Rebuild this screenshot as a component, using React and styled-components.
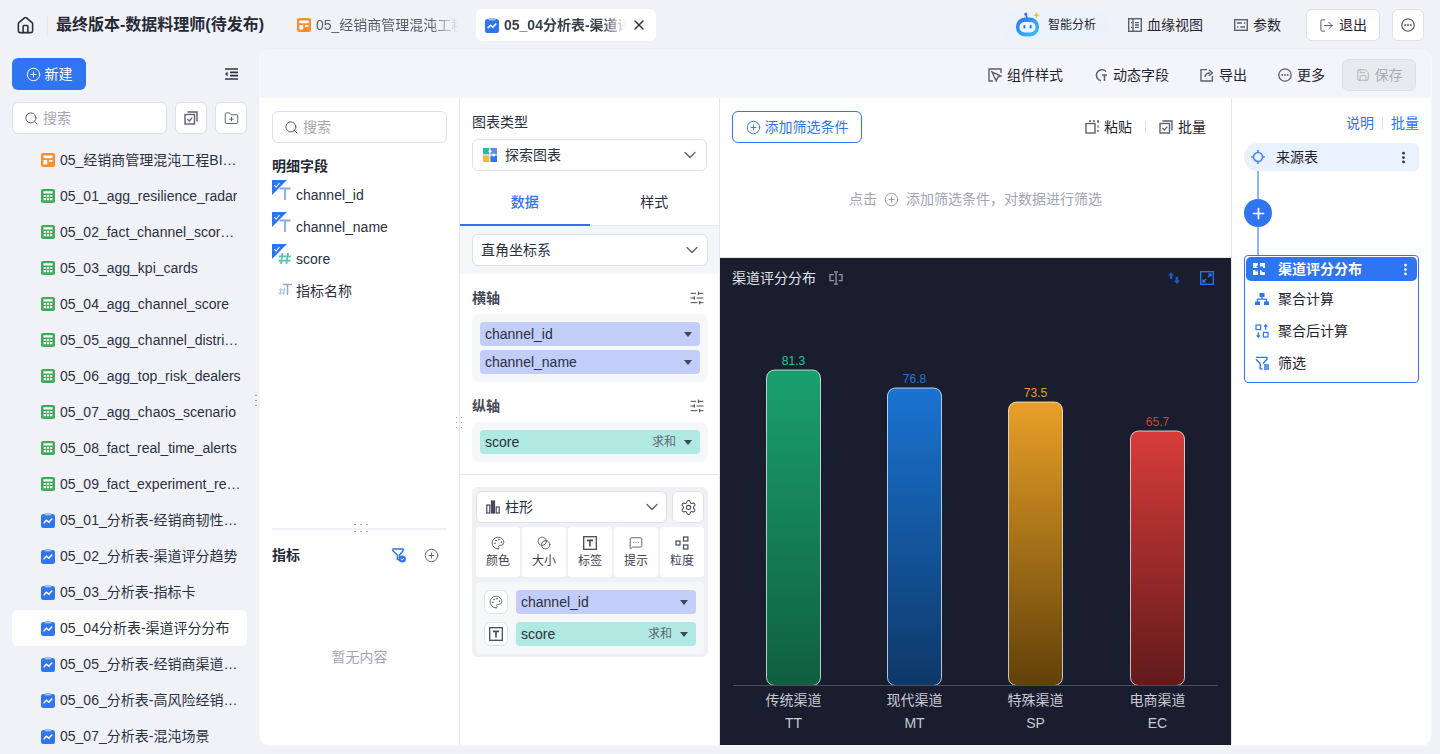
import React from "react";
import styled, { createGlobalStyle } from "styled-components";
import {
  House,
  Search,
  ChevronDown,
  CirclePlus,
  X,
  Settings,
  EllipsisVertical,
  Palette,
  SlidersHorizontal,
  FolderPlus,
  Save,
  LogOut,
  MessageSquareMore,
  Plus,
  Blend,
} from "lucide-react";

const BLUE = "#2f74f0";
const INK = "#1f2430";
const FONT = `"Liberation Sans", "Noto Sans CJK SC", sans-serif`;

const GlobalStyle = createGlobalStyle`
  html, body { margin: 0; padding: 0; height: 754px; overflow: hidden; }
  body { background: #f1f2f8; font-family: ${FONT}; font-size: 14px; line-height: 20px; color: ${INK}; }
  * { box-sizing: border-box; }
`;

/* ---------- drawn icons ---------- */

const Dashboard = () => (
  <svg width="14" height="14" viewBox="0 0 14 14">
    <rect width="14" height="14" rx="2" fill="#f98d2b" />
    <path d="M2.4 2.6h9.2v2.6H2.4zM2.4 7h3.8v4.4H2.4zM8 7h3.6v1.7H8z" fill="#fff" />
  </svg>
);

const Sheet = () => (
  <svg width="14" height="14" viewBox="0 0 14 14">
    <rect width="14" height="14" rx="2" fill="#43a95a" />
    <path d="M2.4 2.2h9.2v2.2H2.4zM2.6 6h2.4v1.8H2.6zM5.8 6h2.4v1.8H5.8zM9 6h2.4v1.8H9zM2.6 9h2.4v2.2H2.6zM5.8 9h2.4v2.2H5.8zM9 9h2.4v2.2H9z" fill="#fff" />
  </svg>
);

const Analysis = () => (
  <svg width="14" height="15" viewBox="0 0 14 15">
    <rect y="1" width="14" height="14" rx="2.5" fill={BLUE} />
    <rect x="3.5" width="7" height="2.4" rx="1" fill="#9dbdf7" />
    <path d="M2.6 10.2l2.8-3 2.4 2 3.4-3.8" fill="none" stroke="#fff" strokeWidth="1.5" />
  </svg>
);

const BatchIcon = ({ size = 14 }) => (
  <svg width={size} height={size} viewBox="0 0 14 14" fill="none" stroke="#5b6070" strokeWidth="1.4">
    <path d="M3.5 1h9.5v9.5" />
    <rect x="1" y="3.5" width="9.5" height="9.5" />
    <path d="M3.4 8l1.9 2 3-3.4" strokeWidth="1.2" />
  </svg>
);

const PasteIcon = () => (
  <svg width="14" height="14" viewBox="0 0 14 14" fill="none" stroke="#5b6070" strokeWidth="1.4">
    <rect x="1" y="3.5" width="9" height="9.5" />
    <path d="M4 1h2M8 1h2M12 1h1.2v2M13 5.5v2M13 10v2" />
  </svg>
);

const StyleIcon = () => (
  <svg width="14" height="14" viewBox="0 0 14 14" fill="none" stroke="#5b6070" strokeWidth="1.4">
    <path d="M13 5V1H1v12h4" />
    <path d="M4 4l9 4-3.4 1.4L8.2 13z" />
  </svg>
);

const DynamicIcon = () => (
  <svg width="14" height="14" viewBox="0 0 14 14" fill="none" stroke="#5b6070" strokeWidth="1.5">
    <path d="M12 3.4A5.6 5.6 0 1 0 7 12.8" />
    <path d="M8 7h5M10.5 7v6" />
  </svg>
);

const ExportIcon = () => (
  <svg width="14" height="14" viewBox="0 0 14 14" fill="none" stroke="#5b6070" strokeWidth="1.4">
    <path d="M7 1.6H1V13h11.4V8" />
    <path d="M5 9c.3-2.6 2-4 5-4M9 2l3.4 3L9 7.8" />
  </svg>
);

const LineageIcon = () => (
  <svg width="14" height="14" viewBox="0 0 14 14" fill="none" stroke="#5b6070" strokeWidth="1.4">
    <rect x=".7" y=".7" width="12.6" height="12.6" />
    <path d="M5 1v12M3 4.6h1M3 9.4h1M7 4.6h4M7 9.4h4M7 7h4" />
  </svg>
);

const ParamIcon = () => (
  <svg width="14" height="12" viewBox="0 0 14 12" fill="none" stroke="#5b6070" strokeWidth="1.4">
    <rect x=".7" y=".7" width="12.6" height="10.6" />
    <path d="M3 4h5M10 4h1.4M3 8h1.4M6.4 8H11" />
  </svg>
);

const MoreCircle = ({ size = 14, color = "#5b6070" }) => (
  <svg width={size} height={size} viewBox="0 0 14 14">
    <circle cx="7" cy="7" r="6.2" fill="none" stroke={color} strokeWidth="1.3" />
    <circle cx="4.2" cy="7" r="1" fill={color} />
    <circle cx="7" cy="7" r="1" fill={color} />
    <circle cx="9.8" cy="7" r="1" fill={color} />
  </svg>
);

const CollapseIcon = () => (
  <svg width="14" height="12" viewBox="0 0 14 12" fill="none" stroke="#2f3442" strokeWidth="1.7">
    <path d="M1 1h13M6 4.4h8M6 7.6h8M1 11h13" />
    <path d="M3.6 3.6L1 6l2.6 2.4z" fill="#2f3442" stroke="none" />
  </svg>
);

const Robot = () => (
  <svg width="28" height="28" viewBox="0 0 28 28">
    <defs>
      <linearGradient id="robotHead" x1="0" y1="0" x2="1" y2="1">
        <stop offset="0" stopColor="#2f6ef2" />
        <stop offset="1" stopColor="#33c9f5" />
      </linearGradient>
    </defs>
    <path d="M13 7l-1-3" stroke="#2f6ef2" strokeWidth="1.6" />
    <circle cx="11.8" cy="3.2" r="1.4" fill="#2f6ef2" />
    <path d="M22.5 1l.9 2.3 2.3.9-2.3.9-.9 2.3-.9-2.3-2.3-.9 2.3-.9z" fill="#f5b92e" />
    <rect x="2" y="6.5" width="23" height="19" rx="9" fill="url(#robotHead)" />
    <rect x="5.5" y="11" width="16" height="10.5" rx="5" fill="#e9f5ff" />
    <rect x="9.4" y="14" width="2" height="3.6" rx="1" fill="#2f6ef2" />
    <rect x="15.6" y="14" width="2" height="3.6" rx="1" fill="#2f6ef2" />
  </svg>
);

const Explore = () => (
  <svg width="14" height="14" viewBox="0 0 14 14">
    <rect width="6.4" height="6.4" fill="#2bb8a6" />
    <rect x="7.4" width="6.6" height="6.4" fill="#6a86ee" />
    <rect y="7.4" width="6.4" height="6.6" fill="#f7b63c" />
    <rect x="7.4" y="7.4" width="6.6" height="6.6" fill="#2f74f0" />
    <circle cx="7" cy="3.2" r="1.5" fill="#fff" />
    <circle cx="10.6" cy="7" r="1.5" fill="#fff" />
  </svg>
);

const BarsIcon = () => (
  <svg width="14" height="14" viewBox="0 0 14 14" fill="none" stroke="#444a5a" strokeWidth="1.2">
    <rect x=".8" y="5" width="3" height="8" />
    <rect x="5.5" y="1" width="3" height="12" fill="#444a5a" />
    <rect x="10.2" y="7" width="3" height="6" />
  </svg>
);

const TextBox = ({ size = 14 }) => (
  <svg width={size} height={size} viewBox="0 0 14 14" fill="none" stroke="#444a60" strokeWidth="1.3">
    <rect x=".7" y=".7" width="12.6" height="12.6" />
    <path d="M4 4.4h6M7 4.4v6" strokeWidth="1.6" />
  </svg>
);

const GrainIcon = () => (
  <svg width="14" height="14" viewBox="0 0 14 14" fill="none" stroke="#444a5a" strokeWidth="1.2">
    <rect x="1" y="5" width="4" height="4" />
    <rect x="8.5" y="1" width="4.4" height="4" />
    <rect x="8.5" y="9" width="4.4" height="4" />
  </svg>
);

const CheckCorner = () => (
  <svg width="15" height="15" viewBox="0 0 15 15">
    <path d="M0 0h15L0 15z" fill={BLUE} />
    <path d="M2.4 5.4l1.8 1.6 3.2-3.8" fill="none" stroke="#fff" strokeWidth="1.1" />
  </svg>
);

const FieldGlyph = ({ kind }) => (
  <FieldIcon>
    {kind !== "mix" && <CheckCorner />}
    <svg width="16" height="16" viewBox="0 0 16 16" fill="none">
      {kind === "text" && <path d="M2.5 3.5h11M8 3.5V15" stroke="#8ea9de" strokeWidth="1.8" />}
      {kind === "num" && <path d="M5.6 4L4 15M11 4L9.4 15M2 7.4h12M1.6 11.6h12" stroke="#5cc4b4" strokeWidth="1.8" />}
      {kind === "mix" && (
        <>
          <path d="M6 3.5h9M10.5 3.5V14" stroke="#8ea9de" strokeWidth="1.5" />
          <path d="M4 7L3 14M7.4 7l-1 7M1.6 9h7M1.2 12h7" stroke="#b5c0de" strokeWidth="1.1" />
        </>
      )}
    </svg>
  </FieldIcon>
);

const FilterCheck = () => (
  <svg width="14" height="15" viewBox="0 0 14 15">
    <path d="M1 1h10v2L7.5 7v5.4L5.4 11V7L1 3z" fill="none" stroke={BLUE} strokeWidth="1.5" />
    <circle cx="10.4" cy="11" r="3.5" fill={BLUE} />
    <path d="M8.8 11l1.2 1.2 2-2.2" fill="none" stroke="#fff" strokeWidth="1" />
  </svg>
);

const SourceIcon = () => (
  <svg width="14" height="14" viewBox="0 0 14 14" fill="none" stroke="#4d8af2" strokeWidth="1.7">
    <circle cx="7" cy="7" r="4.5" />
    <path d="M7 0v3M7 11v3M0 7h3M11 7h3" />
  </svg>
);

const PuzzleIcon = () => (
  <svg width="14" height="14" viewBox="0 0 14 14" fill="#fff">
    <path d="M1 1h5v2.4H4.6v2H6V6H1zM8 1h5v5h-2V4.4H8zM1 8h2.4v1.6h2.2V8H6v5H1zM8 8h1.6v2H13v3H8z" />
  </svg>
);

const AggIcon = () => (
  <svg width="14" height="14" viewBox="0 0 14 14" fill={BLUE}>
    <path d="M4.5 1h5v4h-5zM0 9.5h5V13H0zM9 9.5h5V13H9z" />
    <path d="M2.5 10V7.2h9V10M7 5v2.2" fill="none" stroke={BLUE} strokeWidth="1.3" />
  </svg>
);

const PostCalcIcon = () => (
  <svg width="14" height="14" viewBox="0 0 14 14" fill="none" stroke={BLUE} strokeWidth="1.2">
    <rect x="1" y="1" width="4.6" height="4.6" />
    <rect x="8.4" y="8.4" width="4.6" height="4.6" />
    <path d="M10.7 6V1M9 2.6L10.7.8l1.7 1.8M3.3 8v5M1.6 11.4l1.7 1.8L5 11.4" />
  </svg>
);

const FilterIcon = () => (
  <svg width="14" height="14" viewBox="0 0 14 14" fill="none" stroke={BLUE} strokeWidth="1.4">
    <path d="M1 1.4h11v1.8L8 7.4M5.2 7.6v5L7.4 13" />
    <path d="M1 3.2l4.2 4.4M9 9h5M9 11h5M9 13h5" />
  </svg>
);

const SortIcon = () => (
  <svg width="14" height="14" viewBox="0 0 14 14" fill="#2257bd">
    <path d="M4 1l3.4 3.6H5.4V8H2.8V4.6H.8zM10 13l-3.4-3.6h2V6h2.6v3.4h2z" />
  </svg>
);

const ExpandIcon = () => (
  <svg width="14" height="14" viewBox="0 0 14 14" fill="none" stroke={BLUE} strokeWidth="1.3">
    <rect x=".7" y=".7" width="12.6" height="12.6" />
    <path d="M8 6l3-3M8.6 3H11v2.4M6 8l-3 3M3 8.6V11h2.4" />
  </svg>
);

const TitleEditIcon = () => (
  <svg width="14" height="14" viewBox="0 0 14 14" fill="none" stroke="#9498a6" strokeWidth="1.3">
    <path d="M7 .6v12.8M5 .8h4M5 13.2h4M5 3.6H1v6h4M9.6 3.6H13v6H9.6" />
  </svg>
);

/* ---------- top bar ---------- */

const TopBar = styled.header`
  height: 50px;
  display: flex;
  align-items: center;
  padding: 0 16px;
`;
const HomeLink = styled.div`
  width: 32px;
  height: 20px;
  display: flex;
  align-items: center;
  border-right: 1px solid #e8e9ef;
  margin-right: 8px;
  color: #2c3140;
`;
const AppTitle = styled.h1`
  margin: 0 24px 0 0;
  font-size: 16px;
  line-height: 22px;
  font-weight: 700;
  white-space: nowrap;
  color: #262a36;
`;
const Tab = styled.div`
  width: 180px;
  height: 32px;
  margin-right: 8px;
  padding: 0 9px;
  border-radius: 6px;
  display: flex;
  align-items: center;
  gap: 5px;
  background: ${(p) => (p.$active ? "#fff" : "transparent")};
  font-weight: ${(p) => (p.$active ? 700 : 400)};
  color: ${(p) => (p.$active ? "#3a3f4c" : "#555b69")};
`;
const TabLabel = styled.span`
  flex: 1;
  overflow: hidden;
  white-space: nowrap;
  -webkit-mask-image: linear-gradient(90deg, #000 80%, transparent);
  mask-image: linear-gradient(90deg, #000 80%, transparent);
`;
const TopActions = styled.div`
  margin-left: auto;
  display: flex;
  align-items: center;
`;
const AiPill = styled.div`
  width: 110px;
  height: 31px;
  margin-right: 18px;
  padding-left: 14px;
  border-radius: 16px;
  background: #ebf2fc;
  display: flex;
  align-items: center;
  gap: 6px;
  font-size: 12px;
`;
const TextAction = styled.div`
  display: flex;
  align-items: center;
  gap: 5px;
  white-space: nowrap;
  margin-right: ${(p) => p.$gap ?? 0}px;
  color: ${INK};
`;
const OutlineButton = styled.div`
  height: 32px;
  width: ${(p) => p.$width}px;
  margin-left: ${(p) => p.$left ?? 0}px;
  background: #fff;
  border: 1px solid #dfe1e8;
  border-radius: 6px;
  display: flex;
  align-items: center;
  justify-content: center;
  gap: 5px;
  color: #4d5262;
  flex-shrink: 0;
`;

/* ---------- sidebar ---------- */

const Body = styled.div`
  display: flex;
  height: 704px;
`;
const Sidebar = styled.aside`
  position: relative;
  width: 259px;
  flex-shrink: 0;
  padding: 8px 12px 0;
  overflow: hidden;
`;
const SideHead = styled.div`
  display: flex;
  justify-content: space-between;
  align-items: center;
  padding-right: 9px;
  margin-bottom: 12px;
`;
const NewButton = styled.div`
  width: 74px;
  height: 32px;
  background: ${BLUE};
  border-radius: 6px;
  color: #fff;
  display: flex;
  align-items: center;
  justify-content: center;
  gap: 4px;
`;
const SearchRow = styled.div`
  display: flex;
  gap: 8px;
  margin-bottom: 8px;
`;
const SearchBox = styled.div`
  height: 32px;
  flex: 1;
  padding-left: 11px;
  background: #fff;
  border: 1px solid #dfe1e8;
  border-radius: 6px;
  display: flex;
  align-items: center;
  gap: 4px;
  color: #a5a8b2;
`;
const FileRow = styled.div`
  height: 36px;
  padding: 0 6px 0 29px;
  border-radius: 6px;
  display: flex;
  align-items: center;
  gap: 5px;
  background: ${(p) => (p.$active ? "#fff" : "transparent")};
  span {
    overflow: hidden;
    white-space: nowrap;
    text-overflow: ellipsis;
    color: #2b3040;
  }
  svg {
    flex-shrink: 0;
  }
`;
const Grip = styled.div`
  position: absolute;
  width: ${(p) => p.$w}px;
  height: ${(p) => p.$h}px;
  right: ${(p) => p.$right};
  top: ${(p) => p.$top};
  background-image: radial-gradient(circle, #9a9eaa 0.8px, transparent 1px);
  background-size: ${(p) => p.$tile};
`;

/* ---------- panel ---------- */

const Panel = styled.main`
  width: 1173px;
  height: 696px;
  background: #f4f5fa;
  border: 1px solid #f9f9fc;
  border-radius: 10px;
  overflow: hidden;
  display: flex;
  flex-direction: column;
`;
const PanelBar = styled.div`
  height: 47px;
  flex-shrink: 0;
  display: flex;
  align-items: center;
  justify-content: flex-end;
  padding-right: 15px;
`;
const SaveButton = styled.div`
  width: 74px;
  height: 32px;
  margin-left: 17px;
  background: #e9eaee;
  border: 1px solid #dfe0e5;
  border-radius: 6px;
  color: #a9abb3;
  display: flex;
  align-items: center;
  justify-content: center;
  gap: 5px;
`;
const Columns = styled.div`
  flex: 1;
  display: flex;
  min-height: 0;
  background: #fff;
`;

/* fields column */

const FieldColumn = styled.section`
  position: relative;
  width: 200px;
  flex-shrink: 0;
  border-right: 1px solid #e6e7ec;
  padding: 13px 12px 0;
  display: flex;
  flex-direction: column;
`;
const FieldHeading = styled.div`
  font-weight: 700;
  margin: 15px 0 5px;
  line-height: 16px;
  color: #262a36;
`;
const FieldRow = styled.div`
  height: 32px;
  padding-left: 24px;
  display: flex;
  align-items: center;
  position: relative;
  color: #2b3040;
`;
const FieldIcon = styled.span`
  position: absolute;
  left: 0;
  top: 1px;
  width: 22px;
  height: 24px;
  > svg:first-child {
    position: absolute;
    left: 0;
    top: 0;
  }
  > svg:last-child {
    position: absolute;
    left: 5px;
    top: 5px;
  }
`;
const FieldSpacer = styled.div`
  flex: 1;
  border-bottom: 2px solid #f1f2f5;
`;
const MetricHead = styled.div`
  display: flex;
  align-items: center;
  font-weight: 700;
  margin-top: 17px;
  color: #262a36;
  height: 16px;
  svg:first-of-type {
    margin-left: auto;
    margin-right: 18px;
  }
  svg:last-of-type {
    margin-right: 8px;
    color: #5b6070;
  }
`;
const EmptyNote = styled.div`
  height: 182px;
  display: flex;
  align-items: center;
  justify-content: center;
  color: #a2a5b0;
  padding-top: 5px;
`;

/* config column */

const ConfigColumn = styled.section`
  width: 260px;
  flex-shrink: 0;
  border-right: 1px solid #e6e7ec;
  display: flex;
  flex-direction: column;
`;
const ChartType = styled.div`
  padding: 16px 12px 0;
`;
const SmallLabel = styled.div`
  line-height: 16px;
  margin-bottom: 9px;
  color: #2b3040;
`;
const SelectBox = styled.div`
  height: 32px;
  padding: 0 ${(p) => p.$right ?? 6}px 0 ${(p) => p.$left ?? 10}px;
  background: #fff;
  border: 1px solid #dfe1e8;
  border-radius: 6px;
  display: flex;
  align-items: center;
  gap: 5px;
  color: #2b3040;
  flex: ${(p) => (p.$grow ? 1 : "none")};
  svg:last-child {
    margin-left: auto;
    color: #5b6070;
  }
`;
const TabRow = styled.div`
  margin-top: 9px;
  height: 46px;
  display: flex;
  border-bottom: 1px solid #e6e7ec;
`;
const ConfigTab = styled.div`
  flex: 1;
  display: flex;
  align-items: center;
  justify-content: center;
  color: ${(p) => (p.$active ? BLUE : "#2b3040")};
  font-weight: ${(p) => (p.$active ? 500 : 400)};
  border-bottom: 2px solid ${(p) => (p.$active ? BLUE : "transparent")};
  margin-bottom: -1px;
`;
const CoordBand = styled.div`
  background: #f5f6f9;
  padding: 8px 11px 8px 12px;
`;
const AxisSection = styled.div`
  padding: 16px 11px 0 12px;
`;
const AxisHead = styled.div`
  height: 16px;
  margin-bottom: 8px;
  display: flex;
  align-items: center;
  justify-content: space-between;
  font-weight: 700;
  color: #454a58;
  svg {
    margin-right: 3px;
    color: #454a58;
  }
`;
const AxisBox = styled.div`
  background: #f5f7f9;
  border-radius: 8px;
  padding: 8px;
  display: flex;
  flex-direction: column;
  gap: 4px;
`;
const Pill = styled.div`
  height: 24px;
  flex: 1 1 auto;
  padding: 0 8px 0 5px;
  border-radius: 4px;
  display: flex;
  align-items: center;
  background: ${(p) => (p.$measure ? "#b0e8e2" : "#c3cdfa")};
  color: #2b3040;
  em {
    margin-left: auto;
    font-style: normal;
    font-size: 12px;
    color: #5d6772;
  }
`;
const Caret = styled.i`
  width: 0;
  height: 0;
  margin-left: ${(p) => (p.$auto ? "auto" : "8px")};
  border-left: 4px solid transparent;
  border-right: 4px solid transparent;
  border-top: 5px solid #3f4656;
`;
const MarkDivider = styled.div`
  height: 1px;
  background: #e6e7ec;
  margin: 12px 0;
`;
const MarkBox = styled.div`
  margin: 0 11px 0 12px;
  padding: 4px;
  height: 170px;
  background: #f0f1f6;
  border-radius: 6px;
  display: flex;
  flex-direction: column;
`;
const MarkTop = styled.div`
  display: flex;
  gap: 5px;
`;
const IconSquare = styled.div`
  width: ${(p) => p.$size}px;
  height: ${(p) => p.$size}px;
  flex-shrink: 0;
  background: #fff;
  border: 1px solid #e1e3ea;
  border-radius: 6px;
  display: flex;
  align-items: center;
  justify-content: center;
  color: #4d5262;
`;
const TileRow = styled.div`
  display: grid;
  grid-template-columns: repeat(5, 44px);
  gap: 2px;
  margin: 4px 0 5px;
`;
const Tile = styled.div`
  height: 50px;
  background: #fff;
  border-radius: 4px;
  display: flex;
  flex-direction: column;
  align-items: center;
  justify-content: center;
  gap: 3px;
  font-size: 12px;
  color: #3c4150;
  line-height: 16px;
  svg {
    color: #444a5a;
  }
`;
const MarkFields = styled.div`
  background: #f5f7f9;
  border-radius: 4px;
  padding: 8px;
  display: flex;
  flex-direction: column;
  gap: 8px;
`;
const MarkFieldRow = styled.div`
  display: flex;
  align-items: center;
  gap: 8px;
`;

/* center column */

const CenterColumn = styled.section`
  width: 512px;
  flex-shrink: 0;
  border-right: 1px solid #e6e7ec;
  display: flex;
  flex-direction: column;
`;
const FilterArea = styled.div`
  height: 160px;
  flex-shrink: 0;
  border-bottom: 1px solid #e6e7ec;
  padding: 13px 25px 0 12px;
`;
const FilterTop = styled.div`
  display: flex;
  align-items: center;
`;
const AddFilter = styled.div`
  width: 130px;
  height: 32px;
  border: 1px solid ${BLUE};
  border-radius: 6px;
  color: ${BLUE};
  display: flex;
  align-items: center;
  justify-content: center;
  gap: 4px;
  margin-right: auto;
`;
const Separator = styled.span`
  width: 1px;
  height: 12px;
  background: #e0e1e7;
  margin: 0 ${(p) => p.$gap ?? 13}px;
`;
const FilterHint = styled.div`
  margin-top: 46px;
  padding-left: 13px;
  display: flex;
  align-items: center;
  justify-content: center;
  gap: 7px;
  color: #a2a5b0;
`;
const ChartPanel = styled.div`
  flex: 1;
  min-height: 0;
  background: #191d2e;
  display: flex;
  flex-direction: column;
`;
const ChartHead = styled.div`
  height: 39px;
  flex-shrink: 0;
  padding: 0 17px 0 12px;
  display: flex;
  align-items: center;
  color: #e4e5ec;
  gap: 13px;
  svg:nth-of-type(2) {
    margin-left: auto;
    margin-right: 6px;
  }
`;
const ChartSvg = styled.svg`
  display: block;
  font-family: ${FONT};
`;

/* pipeline column */

const PipeColumn = styled.section`
  flex: 1;
  padding: 17px 12px 0;
  display: flex;
  flex-direction: column;
`;
const PipeLinks = styled.div`
  display: flex;
  justify-content: flex-end;
  align-items: center;
  color: ${BLUE};
  line-height: 16px;
  margin-bottom: 12px;
`;
const SourceRow = styled.div`
  height: 28px;
  padding: 0 8px 0 7px;
  background: #e9f1fd;
  border-radius: 14px 6px 6px 14px;
  display: flex;
  align-items: center;
  gap: 11px;
  color: ${INK};
  svg:last-child {
    margin-left: auto;
  }
`;
const Connector = styled.div`
  width: 28px;
  height: 84px;
  display: flex;
  flex-direction: column;
  align-items: center;
`;
const ConnectorLine = styled.div`
  width: 2px;
  flex: 1;
  background: #8cb4fa;
`;
const AddCircle = styled.div`
  width: 28px;
  height: 28px;
  flex-shrink: 0;
  border-radius: 50%;
  background: ${BLUE};
  color: #fff;
  display: flex;
  align-items: center;
  justify-content: center;
`;
const StepBox = styled.div`
  height: 128px;
  border: 1px solid ${BLUE};
  border-radius: 4px;
  padding: 1px;
`;
const StepHead = styled.div`
  height: 24px;
  margin-bottom: 2px;
  padding: 0 4px 0 6px;
  background: ${BLUE};
  border-radius: 5px;
  color: #fff;
  font-weight: 700;
  display: flex;
  align-items: center;
  gap: 12px;
  svg:last-child {
    margin-left: auto;
  }
`;
const StepRow = styled.div`
  height: 32px;
  padding-left: 9px;
  display: flex;
  align-items: center;
  gap: 9px;
  color: ${INK};
`;

/* ---------- data ---------- */

const files = [
  { icon: <Dashboard />, name: "05_经销商管理混沌工程BI看板总览" },
  { icon: <Sheet />, name: "05_01_agg_resilience_radar" },
  { icon: <Sheet />, name: "05_02_fact_channel_score_trend" },
  { icon: <Sheet />, name: "05_03_agg_kpi_cards" },
  { icon: <Sheet />, name: "05_04_agg_channel_score" },
  { icon: <Sheet />, name: "05_05_agg_channel_distribution" },
  { icon: <Sheet />, name: "05_06_agg_top_risk_dealers" },
  { icon: <Sheet />, name: "05_07_agg_chaos_scenario" },
  { icon: <Sheet />, name: "05_08_fact_real_time_alerts" },
  { icon: <Sheet />, name: "05_09_fact_experiment_results" },
  { icon: <Analysis />, name: "05_01_分析表-经销商韧性雷达图" },
  { icon: <Analysis />, name: "05_02_分析表-渠道评分趋势" },
  { icon: <Analysis />, name: "05_03_分析表-指标卡" },
  { icon: <Analysis />, name: "05_04分析表-渠道评分分布", active: true },
  { icon: <Analysis />, name: "05_05_分析表-经销商渠道分布图" },
  { icon: <Analysis />, name: "05_06_分析表-高风险经销商排行" },
  { icon: <Analysis />, name: "05_07_分析表-混沌场景" },
];

const bars = [
  { x: 46.5, top: 73, value: "81.3", name: "传统渠道", code: "TT", color: "#21c98b", from: "#1aa06d", to: "#0f5f40" },
  { x: 167.5, top: 91, value: "76.8", name: "现代渠道", code: "MT", color: "#2177d8", from: "#1a73d1", to: "#0d3868" },
  { x: 288.5, top: 105, value: "73.5", name: "特殊渠道", code: "SP", color: "#e8a026", from: "#e9a027", to: "#614109" },
  { x: 410.5, top: 134, value: "65.7", name: "电商渠道", code: "EC", color: "#d83b3b", from: "#d83c3a", to: "#611a1a" },
];

const tiles = [
  { icon: <Palette size={14} strokeWidth={1.4} />, label: "颜色" },
  { icon: <Blend size={14} strokeWidth={1.4} />, label: "大小" },
  { icon: <TextBox />, label: "标签" },
  { icon: <MessageSquareMore size={14} strokeWidth={1.4} />, label: "提示" },
  { icon: <GrainIcon />, label: "粒度" },
];

const BarChart = () => (
  <ChartSvg width="511" height="448" viewBox="0 0 511 448">
    <defs>
      {bars.map((b) => (
        <linearGradient key={b.code} id={`bar-${b.code}`} x1="0" y1="0" x2="0" y2="1">
          <stop offset="0" stopColor={b.from} />
          <stop offset="1" stopColor={b.to} />
        </linearGradient>
      ))}
    </defs>
    {bars.map((b) => (
      <g key={b.code}>
        <rect
          x={b.x}
          y={b.top}
          width="54"
          height={388.5 - b.top}
          rx="8"
          fill={`url(#bar-${b.code})`}
          stroke="#fff"
          strokeOpacity="0.72"
        />
        <text x={b.x + 27} y={b.top - 5} textAnchor="middle" fontSize="12" fill={b.color}>
          {b.value}
        </text>
        <text x={b.x + 27} y={408} textAnchor="middle" fontSize="14" fill="#c9cbd5">
          {b.name}
        </text>
        <text x={b.x + 27} y={431} textAnchor="middle" fontSize="14" fill="#c9cbd5">
          {b.code}
        </text>
      </g>
    ))}
    <line x1="13" y1="388.5" x2="498" y2="388.5" stroke="#4a4e5e" />
  </ChartSvg>
);

const App = () => (
  <>
    <GlobalStyle />
    <TopBar>
      <HomeLink>
        <House size={19} strokeWidth={2} />
      </HomeLink>
      <AppTitle>最终版本-数据料理师(待发布)</AppTitle>
      <Tab>
        <Dashboard />
        <TabLabel>05_经销商管理混沌工程BI看板</TabLabel>
      </Tab>
      <Tab $active>
        <Analysis />
        <TabLabel>05_04分析表-渠道评分分布</TabLabel>
        <X size={16} color="#2b3040" />
      </Tab>
      <TopActions>
        <AiPill>
          <Robot />
          智能分析
        </AiPill>
        <TextAction $gap={31}>
          <LineageIcon />
          血缘视图
        </TextAction>
        <TextAction $gap={25}>
          <ParamIcon />
          参数
        </TextAction>
        <OutlineButton $width={74}>
          <LogOut size={15} strokeWidth={1.5} />
          <span style={{ color: INK }}>退出</span>
        </OutlineButton>
        <OutlineButton $width={32} $left={12}>
          <MoreCircle />
        </OutlineButton>
      </TopActions>
    </TopBar>
    <Body>
      <Sidebar>
        <SideHead>
          <NewButton>
            <CirclePlus size={15} strokeWidth={1.6} />
            新建
          </NewButton>
          <CollapseIcon />
        </SideHead>
        <SearchRow>
          <SearchBox>
            <Search size={15} strokeWidth={1.6} color="#5b6070" />
            搜索
          </SearchBox>
          <OutlineButton $width={32}>
            <BatchIcon />
          </OutlineButton>
          <OutlineButton $width={32}>
            <FolderPlus size={15} strokeWidth={1.4} />
          </OutlineButton>
        </SearchRow>
        {files.map((f) => (
          <FileRow key={f.name} $active={f.active}>
            {f.icon}
            <span>{f.name}</span>
          </FileRow>
        ))}
        <Grip $w={4} $h={15} $tile="4px 5px" $right="1px" $top="343px" />
      </Sidebar>
      <Panel>
        <PanelBar>
          <TextAction $gap={31}>
            <StyleIcon />
            组件样式
          </TextAction>
          <TextAction $gap={31}>
            <DynamicIcon />
            动态字段
          </TextAction>
          <TextAction $gap={31}>
            <ExportIcon />
            导出
          </TextAction>
          <TextAction>
            <MoreCircle />
            更多
          </TextAction>
          <SaveButton>
            <Save size={14} strokeWidth={1.5} />
            保存
          </SaveButton>
        </PanelBar>
        <Columns>
          <FieldColumn>
            <SearchBox style={{ flex: "none" }}>
              <Search size={15} strokeWidth={1.6} color="#5b6070" />
              搜索
            </SearchBox>
            <FieldHeading>明细字段</FieldHeading>
            <FieldRow>
              <FieldGlyph kind="text" />
              channel_id
            </FieldRow>
            <FieldRow>
              <FieldGlyph kind="text" />
              channel_name
            </FieldRow>
            <FieldRow>
              <FieldGlyph kind="num" />
              score
            </FieldRow>
            <FieldRow>
              <FieldGlyph kind="mix" />
              指标名称
            </FieldRow>
            <FieldSpacer />
            <MetricHead>
              指标
              <FilterCheck />
              <CirclePlus size={15} strokeWidth={1.5} />
            </MetricHead>
            <EmptyNote>暂无内容</EmptyNote>
            <Grip $w={18} $h={14} $tile="6px 7px" $right="89px" $top="423px" />
            <Grip $w={10} $h={15} $tile="5px 5px" $right="-5px" $top="317px" />
          </FieldColumn>
          <ConfigColumn>
            <ChartType>
              <SmallLabel>图表类型</SmallLabel>
              <SelectBox>
                <Explore />
                <span style={{ marginLeft: 3 }}>探索图表</span>
                <ChevronDown size={20} strokeWidth={1.5} />
              </SelectBox>
            </ChartType>
            <TabRow>
              <ConfigTab $active>数据</ConfigTab>
              <ConfigTab>样式</ConfigTab>
            </TabRow>
            <CoordBand>
              <SelectBox $left={8} $right={5}>
                直角坐标系
                <ChevronDown size={20} strokeWidth={1.5} />
              </SelectBox>
            </CoordBand>
            <AxisSection>
              <AxisHead>
                横轴
                <SlidersHorizontal size={16} strokeWidth={1.5} />
              </AxisHead>
              <AxisBox>
                <Pill>
                  channel_id
                  <Caret $auto />
                </Pill>
                <Pill>
                  channel_name
                  <Caret $auto />
                </Pill>
              </AxisBox>
            </AxisSection>
            <AxisSection>
              <AxisHead>
                纵轴
                <SlidersHorizontal size={16} strokeWidth={1.5} />
              </AxisHead>
              <AxisBox>
                <Pill $measure>
                  score
                  <em>求和</em>
                  <Caret />
                </Pill>
              </AxisBox>
            </AxisSection>
            <MarkDivider />
            <MarkBox>
              <MarkTop>
                <SelectBox $grow $right={4} $left={9}>
                  <BarsIcon />
                  柱形
                  <ChevronDown size={20} strokeWidth={1.5} />
                </SelectBox>
                <IconSquare $size={32}>
                  <Settings size={17} strokeWidth={1.5} />
                </IconSquare>
              </MarkTop>
              <TileRow>
                {tiles.map((t) => (
                  <Tile key={t.label}>
                    {t.icon}
                    {t.label}
                  </Tile>
                ))}
              </TileRow>
              <MarkFields>
                <MarkFieldRow>
                  <IconSquare $size={24}>
                    <Palette size={14} strokeWidth={1.4} />
                  </IconSquare>
                  <Pill>
                    channel_id
                    <Caret $auto />
                  </Pill>
                </MarkFieldRow>
                <MarkFieldRow>
                  <IconSquare $size={24}>
                    <TextBox />
                  </IconSquare>
                  <Pill $measure>
                    score
                    <em>求和</em>
                    <Caret />
                  </Pill>
                </MarkFieldRow>
              </MarkFields>
            </MarkBox>
          </ConfigColumn>
          <CenterColumn>
            <FilterArea>
              <FilterTop>
                <AddFilter>
                  <CirclePlus size={15} strokeWidth={1.5} />
                  添加筛选条件
                </AddFilter>
                <TextAction>
                  <PasteIcon />
                  粘贴
                </TextAction>
                <Separator />
                <TextAction>
                  <BatchIcon />
                  批量
                </TextAction>
              </FilterTop>
              <FilterHint>
                点击
                <CirclePlus size={15} strokeWidth={1.4} color="#8d909c" />
                添加筛选条件，对数据进行筛选
              </FilterHint>
            </FilterArea>
            <ChartPanel>
              <ChartHead>
                渠道评分分布
                <TitleEditIcon />
                <SortIcon />
                <ExpandIcon />
              </ChartHead>
              <BarChart />
            </ChartPanel>
          </CenterColumn>
          <PipeColumn>
            <PipeLinks>
              说明
              <Separator $gap={8} />
              批量
            </PipeLinks>
            <SourceRow>
              <SourceIcon />
              来源表
              <EllipsisVertical size={15} strokeWidth={2.4} color="#2b3040" />
            </SourceRow>
            <Connector>
              <ConnectorLine />
              <AddCircle>
                <Plus size={17} strokeWidth={2.4} />
              </AddCircle>
              <ConnectorLine />
            </Connector>
            <StepBox>
              <StepHead>
                <PuzzleIcon />
                渠道评分分布
                <EllipsisVertical size={15} strokeWidth={2.4} />
              </StepHead>
              <StepRow>
                <AggIcon />
                聚合计算
              </StepRow>
              <StepRow>
                <PostCalcIcon />
                聚合后计算
              </StepRow>
              <StepRow>
                <FilterIcon />
                筛选
              </StepRow>
            </StepBox>
          </PipeColumn>
        </Columns>
      </Panel>
    </Body>
  </>
);

export default App;
